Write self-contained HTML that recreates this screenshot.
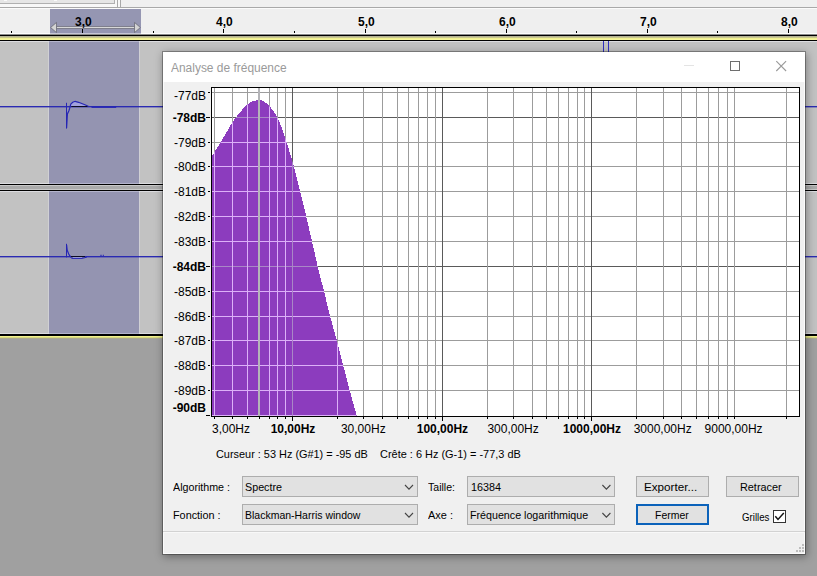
<!DOCTYPE html>
<html lang="fr">
<head>
<meta charset="utf-8">
<title>Analyse de fréquence</title>
<style>
*{box-sizing:border-box;margin:0;padding:0}
html,body{width:817px;height:576px;overflow:hidden}
body{position:relative;background:#a0a0a0;font-family:"Liberation Sans",sans-serif;font-size:12px;color:#000}
.abs,.tk,.rl,.yl,.xl,.t,.plot{position:absolute}
/* top strip */
.topstrip{left:0;top:0;width:817px;height:9px;background:linear-gradient(#f8f8f8 0,#f8f8f8 7px,#a9a9a9 7px,#a9a9a9 8px,#fbfbfb 8px,#fbfbfb 9px)}
.tbL{left:0;top:0;width:115px;height:4px;background:#e6e6e6;border-right:1px solid #b0b0b0;border-bottom:1px solid #b0b0b0}
.tbSep{left:117px;top:0;width:1px;height:7px;background:#a9a9a9}
.tbR{left:120px;top:0;width:697px;height:7px;background:#f0f0f0;border-left:1px solid #a9a9a9}
/* ruler */
.ruler{left:0;top:9px;width:817px;height:24px;background:#efefef}
.rsel{left:50px;top:9px;width:91px;height:24px;background:#9596b2}
.tk{width:1px;background:#000}
.rl{top:14.9px;width:60px;text-align:center;font-weight:bold;font-size:12px;line-height:14px;color:#000}
.band1{left:0;top:33px;width:817px;height:9px;background:linear-gradient(#fcfcfc 0,#fcfcfc 1px,#8a8a8a 1px,#8a8a8a 2px,#000 2px,#000 3px,#b4b294 3px,#b4b294 4px,#c8c68c 4px,#c8c68c 5px,#f0f090 5px,#f0f090 6px,#f6f69a 6px,#f6f69a 7px,#000 7px,#000 8px,#dcdce0 8px,#dcdce0 9px)}
.band1s{left:50px;top:33px;width:91px;height:1px;background:#c6c6d6}
.band1t{left:49px;top:41px;width:90px;height:1px;background:#b4b4cc}
/* tracks */
.track{left:0;width:817px;background:#c2c2c2}
.tsel{left:49px;width:90px;background:#9494b1}
.sep{left:0;top:183px;width:817px;height:9px;background:linear-gradient(#dcdce0 0,#dcdce0 1px,#000 1px,#000 2px,#c8c8c8 2px,#c8c8c8 3px,#aaa 3px,#aaa 6px,#c8c8c8 6px,#c8c8c8 7px,#000 7px,#000 8px,#dcdce0 8px,#dcdce0 9px)}
.sept{left:49px;width:90px;height:1px;background:#b4b4cc}
.vl{width:1px;background:#d0d0d4}
.band2{left:0;top:333px;width:817px;height:6px;background:linear-gradient(#dcdce0 0,#dcdce0 1px,#000 1px,#000 3px,#f2f28e 3px,#f2f28e 4px,#d6d67e 4px,#d6d67e 5px,#aaa98e 5px,#aaa98e 6px)}
.band2t{left:49px;top:333px;width:90px;height:1px;background:#b4b4cc}
.bl{height:2px;left:0;width:817px;background:linear-gradient(#2a2ab2 0,#2a2ab2 1px,rgba(42,42,178,.38) 1px,rgba(42,42,178,.38) 2px)}
/* dialog */
.dlg{left:163px;top:52px;width:642px;height:502px;background:#f0f0f0;box-shadow:inset 0 0 0 1px #fbfbfb,0 0 0 1px rgba(0,0,0,.30),1px 2px 8px 1px rgba(0,0,0,.34)}
.title{left:0;top:0;width:642px;height:30px;background:#fff}
.yl{left:113px;width:93px;text-align:right;line-height:14px;height:14px;font-size:12px;white-space:nowrap}
.xl{top:421.5px;line-height:14px;height:14px;font-size:12px;white-space:nowrap}
.xl.c{width:100px;text-align:center}
.b{font-weight:bold}
.t{white-space:nowrap;font-size:11.5px;line-height:14px;height:14px;transform-origin:0 50%}
.combo{height:21px;background:#e1e1e1;border:1px solid #adadad}
.btn{height:21px;background:#e1e1e1;border:1px solid #adadad}
.btn.def{border:2px solid #0b62ba}
.chk{left:773px;top:510px;width:13px;height:13px;background:#fff;border:1px solid #333}
.hr{left:163px;top:531px;width:642px;height:2px;background:linear-gradient(#d2d2d2 0,#d2d2d2 1px,#f8f8f8 1px,#f8f8f8 2px)}
</style>
</head>
<body>
<!-- main window behind the dialog -->
<div class="abs topstrip"></div>
<div class="abs tbL"></div><div class="abs" style="left:4px;top:0;width:3px;height:1px;background:#fafafa"></div><div class="abs" style="left:54px;top:0;width:3px;height:1px;background:#fafafa"></div><div class="abs tbSep"></div><div class="abs tbR"></div>
<div class="abs ruler"></div>
<div class="abs rsel"></div>
<svg class="abs" style="left:50px;top:20px" width="92" height="14" viewBox="0 0 92 14">
  <rect x="6" y="6.5" width="79" height="2" fill="#d8d8d8" stroke="#5a5a66" stroke-width="0.6"/>
  <polygon points="0.6,7.5 6.5,2.4 6.5,12.6" fill="#d4d4d4" stroke="#6a6a76" stroke-width="0.8"/>
  <polygon points="90.4,7.5 84.5,2.4 84.5,12.6" fill="#d4d4d4" stroke="#6a6a76" stroke-width="0.8"/>
</svg>
<div class="tk" style="left:82px;top:29px;height:4px"></div><div class="rl" style="left:53.4px">3,0</div><div class="tk" style="left:223px;top:29px;height:4px"></div><div class="rl" style="left:194.4px">4,0</div><div class="tk" style="left:365px;top:29px;height:4px"></div><div class="rl" style="left:336.4px">5,0</div><div class="tk" style="left:506px;top:29px;height:4px"></div><div class="rl" style="left:477.4px">6,0</div><div class="tk" style="left:647px;top:29px;height:4px"></div><div class="rl" style="left:618.4px">7,0</div><div class="tk" style="left:788px;top:29px;height:4px"></div><div class="rl" style="left:759.4px">8,0</div><div class="tk" style="left:11px;top:31px;height:2px"></div><div class="tk" style="left:153px;top:31px;height:2px"></div><div class="tk" style="left:294px;top:31px;height:2px"></div><div class="tk" style="left:435px;top:31px;height:2px"></div><div class="tk" style="left:576px;top:31px;height:2px"></div><div class="tk" style="left:717px;top:31px;height:2px"></div>
<div class="abs track" style="top:42px;height:142px"></div>
<div class="abs tsel" style="top:42px;height:142px"></div>
<div class="abs track" style="top:191px;height:143px"></div>
<div class="abs tsel" style="top:191px;height:143px"></div>
<div class="abs vl" style="left:48px;top:42px;height:141px"></div><div class="abs vl" style="left:139px;top:42px;height:141px"></div>
<div class="abs vl" style="left:48px;top:192px;height:141px"></div><div class="abs vl" style="left:139px;top:192px;height:141px"></div>
<div class="abs band1"></div><div class="abs band1s"></div><div class="abs band1t"></div>
<div class="abs sep"></div><div class="abs sept" style="top:183px"></div><div class="abs sept" style="top:191px"></div>
<div class="abs band2"></div><div class="abs band2t"></div>
<div class="abs bl" style="top:106px"></div>
<div class="abs bl" style="top:256px"></div>
<div class="abs" style="left:603px;top:41px;width:1px;height:12px;background:#3030c0"></div>
<div class="abs" style="left:608px;top:41px;width:1px;height:12px;background:#3030c0"></div>
<svg class="abs" style="left:0;top:0" width="163" height="340" viewBox="0 0 163 340" fill="none" stroke="#2626b4" stroke-width="1">
  <path d="M70.8 106 L70.8 104.1 L72.7 102.3 L75.2 101.3 L78.6 102.3 L81.75 103.5 L84.9 104.75 L88 106Z" fill="#a2a2dc" stroke="none"/>
  <path d="M66.5 102.8V128.6"/>
  <path d="M66.6 128 L67.4 114 L68.9 110.7 L69.6 108.5 L70.8 104.1 L72.7 102.3 L75.2 101.3 L78.6 102.3 L81.75 103.5 L84.9 104.75 L88.3 106.3" stroke-width="1.2"/>
  <path d="M71.4 106.5H87.4" stroke="#0c0c24"/>
  <path d="M91.5 107H116.2" stroke-width="1.8"/>
  <path d="M66.5 243.8V257.4"/>
  <path d="M66.6 245 L67.2 250.2 L68.7 254 L70.2 256.4" stroke-width="1.2"/>
  <path d="M73 257.4H82" stroke="#aeaee0" stroke-width="1"/>
  <path d="M70.4 257.2 L72 258.4 H82 L86.8 257.2" stroke-width="1"/>
  <path d="M71 256.5H85" stroke="#0c0c24"/>
  <path d="M100.4 255.4H101.6M102.8 255.4H103.8" stroke-width="1.2"/>
</svg>

<!-- dialog -->
<div class="abs dlg">
  <div class="abs title"></div>
</div>
<div class="t" style="left:170.7px;top:61.1px;font-size:12px;color:#9a9a9a;transform:scaleX(0.9957)">Analyse de fréquence</div>
<svg class="abs" style="left:680px;top:56px" width="112" height="20" viewBox="0 0 112 20" fill="none">
  <path d="M4 9.5H14" stroke="#e4e4e4" stroke-width="1"/>
  <rect x="50.5" y="5.5" width="9" height="9" stroke="#6e6e6e" stroke-width="1"/>
  <path d="M96.3 5.2L106.1 15M106.1 5.2L96.3 15" stroke="#999" stroke-width="1.1"/>
</svg>
<svg class="plot" width="817" height="576" viewBox="0 0 817 576"><defs><clipPath id="pc"><polygon points="212,156.4 214.7,151.6 220.2,143 226.25,132.7 232.3,122.4 237.2,115.7 243.3,108.4 248.1,103.8 253,101.1 257.6,100 262.2,100.5 267,103.5 271.3,108.4 274.9,113.2 278,118.7 281,126 284.1,134.5 286.5,141.8 288.9,149.7 292,160.1 293.85,166.5 300.1,191.25 306.3,216.7 312.05,241.6 317.75,266.6 324.05,291.6 330.2,316.4 336.85,340.7 343.2,365.3 349.6,390.2 356.35,414.5 356.6,416 212,416"/></clipPath></defs><rect x="211" y="87" width="589" height="330" fill="#fff"/><g shape-rendering="crispEdges" ><rect x="212" y="92" width="588" height="1" fill="#9c9c9c"/><rect x="212" y="142" width="588" height="1" fill="#9c9c9c"/><rect x="212" y="166" width="588" height="1" fill="#9c9c9c"/><rect x="212" y="191" width="588" height="1" fill="#9c9c9c"/><rect x="212" y="216" width="588" height="1" fill="#9c9c9c"/><rect x="212" y="241" width="588" height="1" fill="#9c9c9c"/><rect x="212" y="291" width="588" height="1" fill="#9c9c9c"/><rect x="212" y="316" width="588" height="1" fill="#9c9c9c"/><rect x="212" y="340" width="588" height="1" fill="#9c9c9c"/><rect x="212" y="365" width="588" height="1" fill="#9c9c9c"/><rect x="212" y="390" width="588" height="1" fill="#9c9c9c"/><rect x="212" y="117" width="588" height="1" fill="#5a5a5a"/><rect x="212" y="266" width="588" height="1" fill="#5a5a5a"/><rect x="214" y="88" width="1" height="329" fill="#9c9c9c"/><rect x="232" y="88" width="1" height="329" fill="#9c9c9c"/><rect x="247" y="88" width="1" height="329" fill="#9c9c9c"/><rect x="259" y="88" width="1" height="329" fill="#9c9c9c"/><rect x="269" y="88" width="1" height="329" fill="#9c9c9c"/><rect x="277" y="88" width="1" height="329" fill="#9c9c9c"/><rect x="285" y="88" width="1" height="329" fill="#9c9c9c"/><rect x="337" y="88" width="1" height="329" fill="#9c9c9c"/><rect x="363" y="88" width="1" height="329" fill="#9c9c9c"/><rect x="382" y="88" width="1" height="329" fill="#9c9c9c"/><rect x="397" y="88" width="1" height="329" fill="#9c9c9c"/><rect x="408" y="88" width="1" height="329" fill="#9c9c9c"/><rect x="418" y="88" width="1" height="329" fill="#9c9c9c"/><rect x="427" y="88" width="1" height="329" fill="#9c9c9c"/><rect x="435" y="88" width="1" height="329" fill="#9c9c9c"/><rect x="487" y="88" width="1" height="329" fill="#9c9c9c"/><rect x="513" y="88" width="1" height="329" fill="#9c9c9c"/><rect x="532" y="88" width="1" height="329" fill="#9c9c9c"/><rect x="546" y="88" width="1" height="329" fill="#9c9c9c"/><rect x="558" y="88" width="1" height="329" fill="#9c9c9c"/><rect x="568" y="88" width="1" height="329" fill="#9c9c9c"/><rect x="577" y="88" width="1" height="329" fill="#9c9c9c"/><rect x="584" y="88" width="1" height="329" fill="#9c9c9c"/><rect x="636" y="88" width="1" height="329" fill="#9c9c9c"/><rect x="663" y="88" width="1" height="329" fill="#9c9c9c"/><rect x="681" y="88" width="1" height="329" fill="#9c9c9c"/><rect x="696" y="88" width="1" height="329" fill="#9c9c9c"/><rect x="708" y="88" width="1" height="329" fill="#9c9c9c"/><rect x="718" y="88" width="1" height="329" fill="#9c9c9c"/><rect x="727" y="88" width="1" height="329" fill="#9c9c9c"/><rect x="734" y="88" width="1" height="329" fill="#9c9c9c"/><rect x="786" y="88" width="1" height="329" fill="#9c9c9c"/><rect x="292" y="88" width="1" height="329" fill="#5a5a5a"/><rect x="442" y="88" width="1" height="329" fill="#5a5a5a"/><rect x="591" y="88" width="1" height="329" fill="#5a5a5a"/></g><polygon points="212,156.4 214.7,151.6 220.2,143 226.25,132.7 232.3,122.4 237.2,115.7 243.3,108.4 248.1,103.8 253,101.1 257.6,100 262.2,100.5 267,103.5 271.3,108.4 274.9,113.2 278,118.7 281,126 284.1,134.5 286.5,141.8 288.9,149.7 292,160.1 293.85,166.5 300.1,191.25 306.3,216.7 312.05,241.6 317.75,266.6 324.05,291.6 330.2,316.4 336.85,340.7 343.2,365.3 349.6,390.2 356.35,414.5 356.6,416 212,416" fill="#8c3cbe" shape-rendering="crispEdges"/><g shape-rendering="crispEdges" clip-path="url(#pc)"><rect x="212" y="92" width="588" height="1" fill="#dcb0f8"/><rect x="212" y="142" width="588" height="1" fill="#dcb0f8"/><rect x="212" y="166" width="588" height="1" fill="#dcb0f8"/><rect x="212" y="191" width="588" height="1" fill="#dcb0f8"/><rect x="212" y="216" width="588" height="1" fill="#dcb0f8"/><rect x="212" y="241" width="588" height="1" fill="#dcb0f8"/><rect x="212" y="291" width="588" height="1" fill="#dcb0f8"/><rect x="212" y="316" width="588" height="1" fill="#dcb0f8"/><rect x="212" y="340" width="588" height="1" fill="#dcb0f8"/><rect x="212" y="365" width="588" height="1" fill="#dcb0f8"/><rect x="212" y="390" width="588" height="1" fill="#dcb0f8"/><rect x="212" y="117" width="588" height="1" fill="#a987c6"/><rect x="212" y="266" width="588" height="1" fill="#a987c6"/><rect x="212" y="415" width="588" height="1" fill="#dcb0f8"/><rect x="214" y="88" width="1" height="329" fill="#dcb0f8"/><rect x="232" y="88" width="1" height="329" fill="#dcb0f8"/><rect x="247" y="88" width="1" height="329" fill="#dcb0f8"/><rect x="259" y="88" width="1" height="329" fill="#dcb0f8"/><rect x="269" y="88" width="1" height="329" fill="#dcb0f8"/><rect x="277" y="88" width="1" height="329" fill="#dcb0f8"/><rect x="285" y="88" width="1" height="329" fill="#dcb0f8"/><rect x="337" y="88" width="1" height="329" fill="#dcb0f8"/><rect x="363" y="88" width="1" height="329" fill="#dcb0f8"/><rect x="382" y="88" width="1" height="329" fill="#dcb0f8"/><rect x="397" y="88" width="1" height="329" fill="#dcb0f8"/><rect x="408" y="88" width="1" height="329" fill="#dcb0f8"/><rect x="418" y="88" width="1" height="329" fill="#dcb0f8"/><rect x="427" y="88" width="1" height="329" fill="#dcb0f8"/><rect x="435" y="88" width="1" height="329" fill="#dcb0f8"/><rect x="487" y="88" width="1" height="329" fill="#dcb0f8"/><rect x="513" y="88" width="1" height="329" fill="#dcb0f8"/><rect x="532" y="88" width="1" height="329" fill="#dcb0f8"/><rect x="546" y="88" width="1" height="329" fill="#dcb0f8"/><rect x="558" y="88" width="1" height="329" fill="#dcb0f8"/><rect x="568" y="88" width="1" height="329" fill="#dcb0f8"/><rect x="577" y="88" width="1" height="329" fill="#dcb0f8"/><rect x="584" y="88" width="1" height="329" fill="#dcb0f8"/><rect x="636" y="88" width="1" height="329" fill="#dcb0f8"/><rect x="663" y="88" width="1" height="329" fill="#dcb0f8"/><rect x="681" y="88" width="1" height="329" fill="#dcb0f8"/><rect x="696" y="88" width="1" height="329" fill="#dcb0f8"/><rect x="708" y="88" width="1" height="329" fill="#dcb0f8"/><rect x="718" y="88" width="1" height="329" fill="#dcb0f8"/><rect x="727" y="88" width="1" height="329" fill="#dcb0f8"/><rect x="734" y="88" width="1" height="329" fill="#dcb0f8"/><rect x="786" y="88" width="1" height="329" fill="#dcb0f8"/><rect x="292" y="88" width="1" height="329" fill="#a987c6"/><rect x="442" y="88" width="1" height="329" fill="#a987c6"/><rect x="591" y="88" width="1" height="329" fill="#a987c6"/></g><rect x="258" y="88" width="2" height="329" fill="#b4b4b8" shape-rendering="crispEdges"/><g shape-rendering="crispEdges" fill="#000"><rect x="211" y="87" width="589" height="1"/><rect x="211" y="87" width="1" height="330"/><rect x="799" y="87" width="1" height="330"/><rect x="211" y="416" width="589" height="1"/><rect x="208" y="92" width="2" height="1"/><rect x="206" y="117" width="4" height="1"/><rect x="208" y="142" width="2" height="1"/><rect x="208" y="166" width="2" height="1"/><rect x="208" y="191" width="2" height="1"/><rect x="208" y="216" width="2" height="1"/><rect x="208" y="241" width="2" height="1"/><rect x="206" y="266" width="4" height="1"/><rect x="208" y="291" width="2" height="1"/><rect x="208" y="316" width="2" height="1"/><rect x="208" y="340" width="2" height="1"/><rect x="208" y="365" width="2" height="1"/><rect x="208" y="390" width="2" height="1"/><rect x="206" y="415" width="4" height="1"/><rect x="214" y="417" width="1" height="2"/><rect x="232" y="417" width="1" height="2"/><rect x="247" y="417" width="1" height="2"/><rect x="259" y="417" width="1" height="2"/><rect x="269" y="417" width="1" height="2"/><rect x="277" y="417" width="1" height="2"/><rect x="285" y="417" width="1" height="2"/><rect x="337" y="417" width="1" height="2"/><rect x="363" y="417" width="1" height="2"/><rect x="382" y="417" width="1" height="2"/><rect x="397" y="417" width="1" height="2"/><rect x="408" y="417" width="1" height="2"/><rect x="418" y="417" width="1" height="2"/><rect x="427" y="417" width="1" height="2"/><rect x="435" y="417" width="1" height="2"/><rect x="487" y="417" width="1" height="2"/><rect x="513" y="417" width="1" height="2"/><rect x="532" y="417" width="1" height="2"/><rect x="546" y="417" width="1" height="2"/><rect x="558" y="417" width="1" height="2"/><rect x="568" y="417" width="1" height="2"/><rect x="577" y="417" width="1" height="2"/><rect x="584" y="417" width="1" height="2"/><rect x="636" y="417" width="1" height="2"/><rect x="663" y="417" width="1" height="2"/><rect x="681" y="417" width="1" height="2"/><rect x="696" y="417" width="1" height="2"/><rect x="708" y="417" width="1" height="2"/><rect x="718" y="417" width="1" height="2"/><rect x="727" y="417" width="1" height="2"/><rect x="734" y="417" width="1" height="2"/><rect x="786" y="417" width="1" height="2"/><rect x="292" y="417" width="1" height="4"/><rect x="442" y="417" width="1" height="4"/><rect x="591" y="417" width="1" height="4"/></g></svg>
<div class="yl" style="top:88.6px">-77dB</div><div class="yl b" style="top:110.5px">-78dB</div><div class="yl" style="top:135.5px">-79dB</div><div class="yl" style="top:159.5px">-80dB</div><div class="yl" style="top:184.5px">-81dB</div><div class="yl" style="top:209.5px">-82dB</div><div class="yl" style="top:234.5px">-83dB</div><div class="yl b" style="top:259.5px">-84dB</div><div class="yl" style="top:284.5px">-85dB</div><div class="yl" style="top:309.5px">-86dB</div><div class="yl" style="top:333.5px">-87dB</div><div class="yl" style="top:358.5px">-88dB</div><div class="yl" style="top:383.5px">-89dB</div><div class="yl b" style="top:401.0px">-90dB</div>
<div class="xl" style="left:212px">3,00Hz</div><div class="xl b c" style="left:243px">10,00Hz</div><div class="xl c" style="left:313.3px">30,00Hz</div><div class="xl b c" style="left:392.4px">100,00Hz</div><div class="xl c" style="left:463.1px">300,00Hz</div><div class="xl b c" style="left:542px">1000,00Hz</div><div class="xl c" style="left:612.7px">3000,00Hz</div><div class="xl c" style="left:683.6px">9000,00Hz</div>
<div class="t" style="left:215.5px;top:447px;transform:scaleX(0.9481)">Curseur : 53 Hz (G#1) = -95 dB</div>
<div class="t" style="left:380px;top:447px;transform:scaleX(0.9516)">Crête : 6 Hz (G-1) = -77,3 dB</div>

<div class="t" style="left:172.6px;top:480px;transform:scaleX(0.9290)">Algorithme :</div>
<div class="abs combo" style="left:242px;top:476px;width:176px"></div>
<div class="t" style="left:245.3px;top:480px;transform:scaleX(0.9334)">Spectre</div>
<div class="t" style="left:172.6px;top:508px;transform:scaleX(0.9426)">Fonction :</div>
<div class="abs combo" style="left:242px;top:504px;width:176px"></div>
<div class="t" style="left:245.3px;top:508px;transform:scaleX(0.9119)">Blackman-Harris window</div>

<div class="t" style="left:428px;top:480px;transform:scaleX(0.9182)">Taille:</div>
<div class="abs combo" style="left:467px;top:476px;width:148px"></div>
<div class="t" style="left:471.3px;top:480px;transform:scaleX(0.9380)">16384</div>
<div class="t" style="left:428px;top:508px;transform:scaleX(0.9535)">Axe :</div>
<div class="abs combo" style="left:467px;top:504px;width:148px"></div>
<div class="t" style="left:470.2px;top:508px;transform:scaleX(0.9291)">Fréquence logarithmique</div>

<svg class="abs" style="left:400px;top:480px" width="220" height="44" viewBox="0 0 220 44" fill="none" stroke="#444" stroke-width="1.1">
  <path d="M5 5L9 9.2L13 5"/><path d="M5 33L9 37.2L13 33"/>
  <path d="M202.4 5L206.4 9.2L210.4 5"/><path d="M202.4 33L206.4 37.2L210.4 33"/>
</svg>

<div class="abs btn" style="left:636px;top:476px;width:73px"></div>
<div class="t" style="left:644.4px;top:480px;transform:scaleX(1.0148)">Exporter...</div>
<div class="abs btn" style="left:726px;top:476px;width:73px"></div>
<div class="t" style="left:740.4px;top:480px;transform:scaleX(0.9431)">Retracer</div>
<div class="abs btn def" style="left:636px;top:504px;width:73px"></div>
<div class="t" style="left:654.8px;top:507.6px;transform:scaleX(0.9093)">Fermer</div>
<div class="t" style="left:741.6px;top:510px;transform:scaleX(0.8407)">Grilles</div>
<div class="abs chk"></div>
<svg class="abs" style="left:773px;top:510px" width="13" height="13" viewBox="0 0 13 13" fill="none" stroke="#111" stroke-width="1.5"><path d="M2.3 6.3L5 9.4L10.8 3.1"/></svg>
<div class="abs hr"></div>
<svg class="abs" style="left:794px;top:543px" width="11" height="11" viewBox="0 0 11 11" fill="#bdbdbd" shape-rendering="crispEdges">
  <rect x="8" y="1" width="2" height="2"/>
  <rect x="5" y="4" width="2" height="2"/><rect x="8" y="4" width="2" height="2"/>
  <rect x="2" y="7" width="2" height="2"/><rect x="5" y="7" width="2" height="2"/><rect x="8" y="7" width="2" height="2"/>
</svg>
</body>
</html>
